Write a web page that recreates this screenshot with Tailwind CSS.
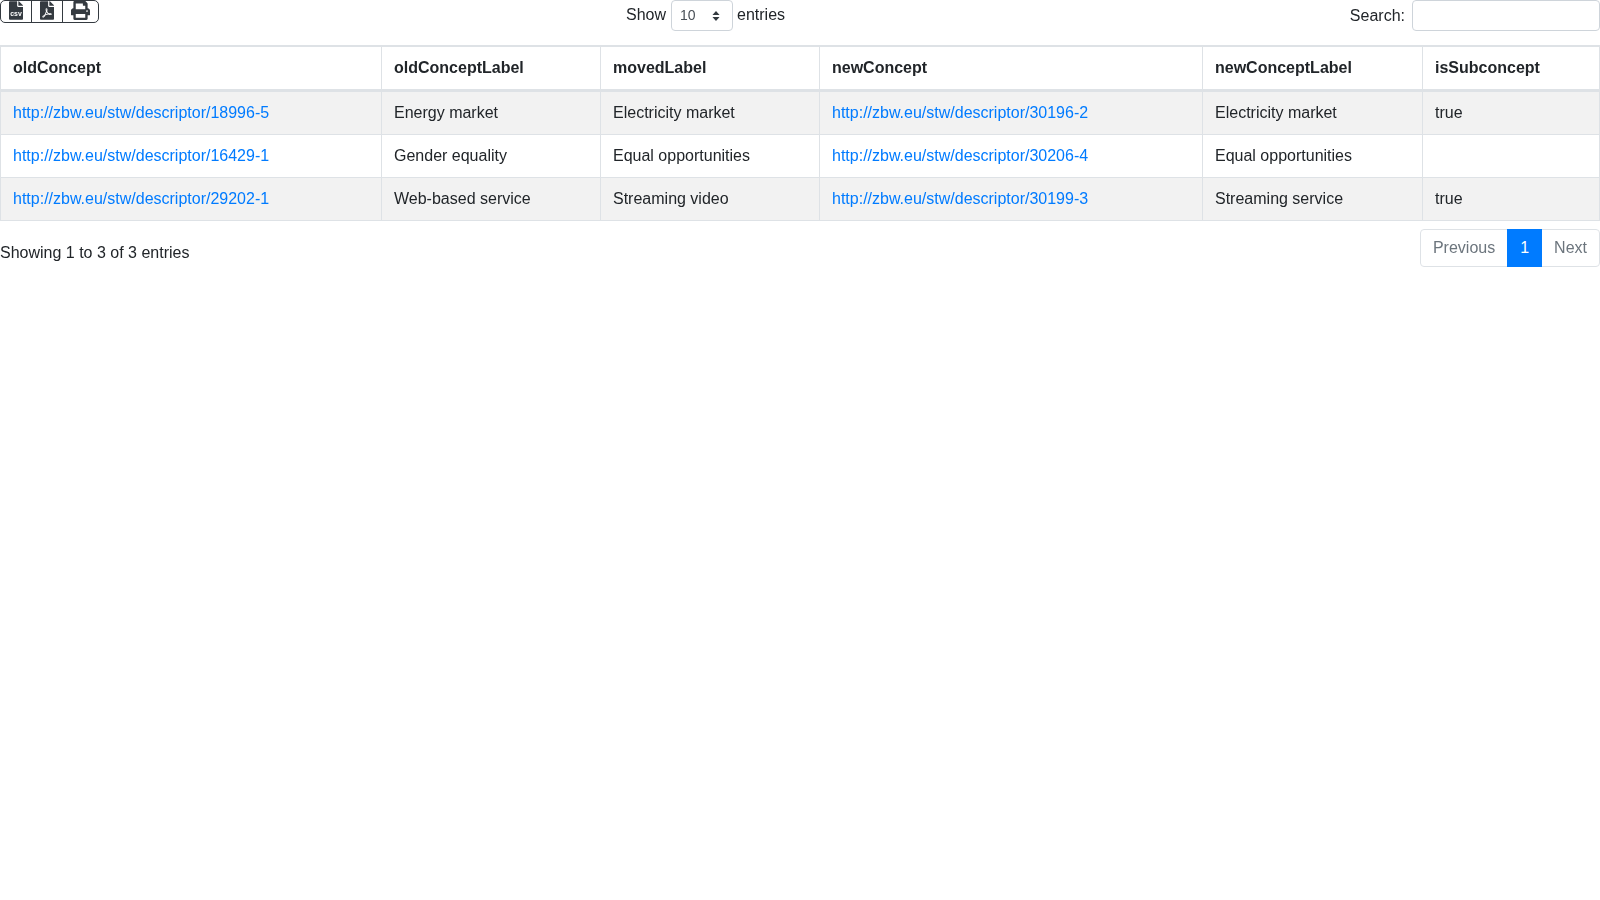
<!DOCTYPE html>
<html lang="en">
<head>
  <meta charset="UTF-8" />
  <title>Moved concepts</title>
  <script src="https://cdn.jsdelivr.net/npm/@tailwindcss/browser@4"></script>
</head>
<body class="bg-white text-[#212529] text-base leading-6 font-['Liberation_Sans',Arial,sans-serif]">
<div class="[will-change:opacity]">
  <div class="grid grid-cols-[411px_589px_1fr] h-[45px]">
    <div>
      <div class="inline-flex h-[23px] border border-[#343a40] rounded-[5px] overflow-hidden">
        <button class="w-[31px] flex justify-center items-start border-r border-[#343a40]">
          <svg class="w-[14px] h-[19px]" viewBox="0 0 384 512" fill="#343a40"><path d="M224 136V0H24C10.7 0 0 10.7 0 24v464c0 13.3 10.7 24 24 24h336c13.3 0 24-10.7 24-24V160H248c-13.2 0-24-10.8-24-24zM377 105L279 7c-4.500-4.500-10.600-7-17-7h-6v128h128v-6.100c0-6.300-2.500-12.400-7-16.900z"/><text x="192" y="395" text-anchor="middle" font-size="190" font-weight="700" fill="#fff">csv</text></svg>
        </button>
        <button class="w-[31px] flex justify-center items-start border-r border-[#343a40]">
          <svg class="w-[14px] h-[19px]" viewBox="0 0 384 512" fill="#343a40"><path d="M181.900 256.100c-5-16-4.900-46.900-2-46.900 8.400 0 7.600 36.900 2 46.900zm-1.700 47.200c-7.700 20.200-17.300 43.300-28.400 62.700 18.300-7 39-17.200 62.900-21.900-12.700-9.600-24.900-23.400-34.500-40.800zM86.100 428.100c0 .8 13.200-5.400 34.900-40.200-6.700 6.300-29.100 24.500-34.900 40.200zM248 160h136v328c0 13.300-10.700 24-24 24H24c-13.300 0-24-10.700-24-24V24C0 10.700 10.700 0 24 0h200v136c0 13.200 10.800 24 24 24zm-8 171.800c-20-12.200-33.300-29-42.700-53.800 4.500-18.500 11.600-46.600 6.200-64.200-4.700-29.400-42.400-26.500-47.800-6.800-5 18.300-.4 44.100 8.100 77-11.600 27.600-28.700 64.600-40.800 85.800-.1 0-.1.1-.2.1-27.100 13.900-73.600 44.500-54.500 68 5.600 6.900 16 10 21.500 10 17.900 0 35.700-18 61.100-61.800 25.800-8.500 54.100-19.100 79-23.200 21.700 11.800 47.100 19.500 64 19.500 29.200 0 31.200-32 19.700-43.400-13.900-13.600-54.300-9.700-73.600-7.200zM377 105L279 7c-4.500-4.500-10.600-7-17-7h-6v128h128v-6.100c0-6.300-2.500-12.400-7-16.900zm-74.100 255.300c4.100-2.700-2.500-11.900-42.800-9 37.100 15.800 42.800 9 42.800 9z"/></svg>
        </button>
        <button class="w-[35px] flex justify-center items-start">
          <svg class="w-[19px] h-[19px]" viewBox="0 0 512 512" fill="#343a40"><path d="M448 192V77.250c0-8.490-3.370-16.620-9.370-22.630L393.370 9.370c-6-6-14.140-9.370-22.630-9.370H96C78.330 0 64 14.330 64 32v160c-35.350 0-64 28.650-64 64v112c0 8.840 7.160 16 16 16h48v96c0 17.670 14.330 32 32 32h320c17.670 0 32-14.330 32-32v-96h48c8.840 0 16-7.160 16-16V256c0-35.350-28.650-64-64-64zm-64 256H128v-96h256v96zm0-224H128V64h192v48c0 8.840 7.160 16 16 16h48v96zm48 72c-13.250 0-24-10.750-24-24 0-13.260 10.750-24 24-24s24 10.740 24 24c0 13.250-10.750 24-24 24z"/></svg>
        </button>
      </div>
    </div>
    <div class="flex justify-center items-start leading-[30px]">
      <span>Show</span>
      <div class="relative w-[62px] h-[31px] ml-[5px] mr-[4px]">
        <select class="block w-full h-full appearance-none border border-[#ced4da] rounded-[4px] pl-[8px] pb-[2px] text-sm text-[#495057] bg-white">
          <option>10</option>
        </select>
        <svg class="absolute right-[13px] top-[11px] w-[8px] h-[10px]" viewBox="0 0 9 11" fill="#343a40"><path d="M4.500 0 8.500 4.500H.5zM4.500 11 .5 6.500h8z"/></svg>
      </div>
      <span>entries</span>
    </div>
    <div class="flex justify-end items-start gap-[7px] leading-[31px]">
      <label for="search">Search:</label>
      <input id="search" type="search" class="w-[188px] h-[31px] border border-[#ced4da] rounded-[4px] bg-white" />
    </div>
  </div>

  <table class="w-full table-fixed border-collapse">
    <colgroup>
      <col class="w-[381px]" /><col class="w-[219px]" /><col class="w-[219px]" /><col class="w-[383px]" /><col class="w-[220px]" /><col />
    </colgroup>
    <thead class="font-bold text-left">
      <tr>
        <th class="border border-t-2 border-b-[3px] border-[#dee2e6] px-3 py-[9px]">oldConcept</th>
        <th class="border border-t-2 border-b-[3px] border-[#dee2e6] px-3 py-[9px]">oldConceptLabel</th>
        <th class="border border-t-2 border-b-[3px] border-[#dee2e6] px-3 py-[9px]">movedLabel</th>
        <th class="border border-t-2 border-b-[3px] border-[#dee2e6] px-3 py-[9px]">newConcept</th>
        <th class="border border-t-2 border-b-[3px] border-[#dee2e6] px-3 py-[9px]">newConceptLabel</th>
        <th class="border border-t-2 border-b-[3px] border-[#dee2e6] px-3 py-[9px]">isSubconcept</th>
      </tr>
    </thead>
    <tbody>
      <tr class="bg-[#f2f2f2]">
        <td class="border border-[#dee2e6] px-3 py-[9px]"><a href="#" class="text-[#007bff]">http://zbw.eu/stw/descriptor/18996-5</a></td>
        <td class="border border-[#dee2e6] px-3 py-[9px]">Energy market</td>
        <td class="border border-[#dee2e6] px-3 py-[9px]">Electricity market</td>
        <td class="border border-[#dee2e6] px-3 py-[9px]"><a href="#" class="text-[#007bff]">http://zbw.eu/stw/descriptor/30196-2</a></td>
        <td class="border border-[#dee2e6] px-3 py-[9px]">Electricity market</td>
        <td class="border border-[#dee2e6] px-3 py-[9px]">true</td>
      </tr>
      <tr>
        <td class="border border-[#dee2e6] px-3 py-[9px]"><a href="#" class="text-[#007bff]">http://zbw.eu/stw/descriptor/16429-1</a></td>
        <td class="border border-[#dee2e6] px-3 py-[9px]">Gender equality</td>
        <td class="border border-[#dee2e6] px-3 py-[9px]">Equal opportunities</td>
        <td class="border border-[#dee2e6] px-3 py-[9px]"><a href="#" class="text-[#007bff]">http://zbw.eu/stw/descriptor/30206-4</a></td>
        <td class="border border-[#dee2e6] px-3 py-[9px]">Equal opportunities</td>
        <td class="border border-[#dee2e6] px-3 py-[9px]"></td>
      </tr>
      <tr class="bg-[#f2f2f2]">
        <td class="border border-[#dee2e6] px-3 py-[9px]"><a href="#" class="text-[#007bff]">http://zbw.eu/stw/descriptor/29202-1</a></td>
        <td class="border border-[#dee2e6] px-3 py-[9px]">Web-based service</td>
        <td class="border border-[#dee2e6] px-3 py-[9px]">Streaming video</td>
        <td class="border border-[#dee2e6] px-3 py-[9px]"><a href="#" class="text-[#007bff]">http://zbw.eu/stw/descriptor/30199-3</a></td>
        <td class="border border-[#dee2e6] px-3 py-[9px]">Streaming service</td>
        <td class="border border-[#dee2e6] px-3 py-[9px]">true</td>
      </tr>
    </tbody>
  </table>

  <div class="flex justify-between items-start mt-2">
    <div class="pt-[12px]">Showing 1 to 3 of 3 entries</div>
    <ul class="flex h-[38px]">
      <li class="px-3 py-[6px] border border-[#dee2e6] rounded-l-[4px] text-[#6c757d]">Previous</li>
      <li class="relative z-10 px-3 py-[6px] border border-[#007bff] bg-[#007bff] text-white -ml-px">1</li>
      <li class="px-3 py-[6px] border border-[#dee2e6] rounded-r-[4px] text-[#6c757d] -ml-px">Next</li>
    </ul>
  </div>
</div>
</body>
</html>
